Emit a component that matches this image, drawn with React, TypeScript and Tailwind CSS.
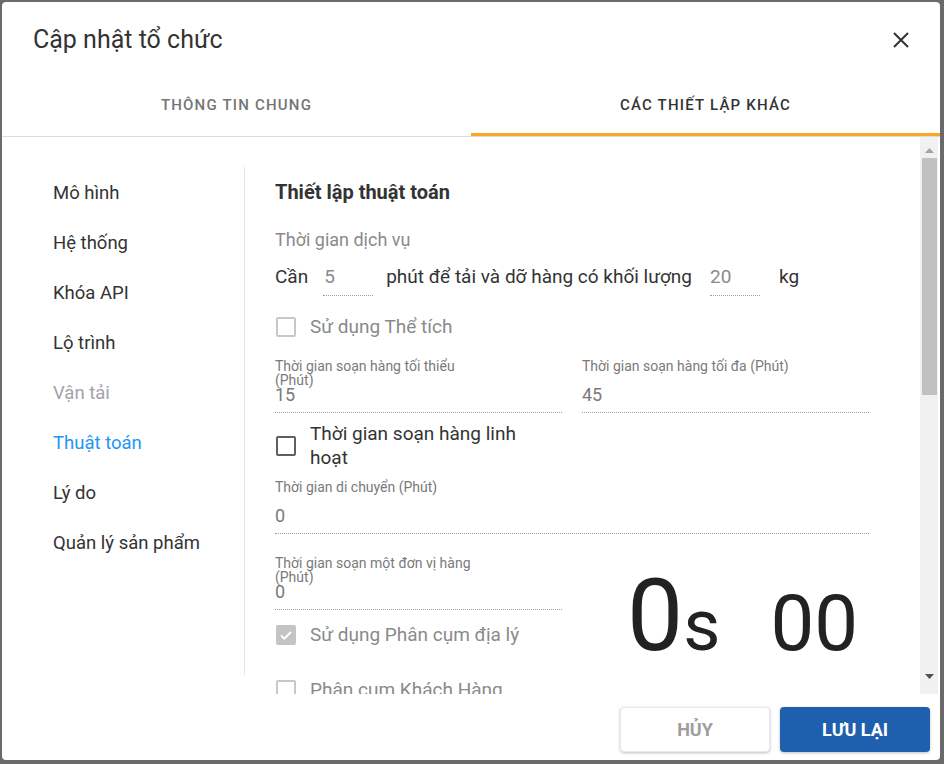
import React from 'react';

const menu = [
  { label: 'Mô hình', cls: 'text-[#333]' },
  { label: 'Hệ thống', cls: 'text-[#333]' },
  { label: 'Khóa API', cls: 'text-[#333]' },
  { label: 'Lộ trình', cls: 'text-[#333]' },
  { label: 'Vận tải', cls: 'text-[#a0a4a8]' },
  { label: 'Thuật toán', cls: 'text-[#2196f3]' },
  { label: 'Lý do', cls: 'text-[#333]' },
  { label: 'Quản lý sản phẩm', cls: 'text-[#333]' },
];

const Checkbox: React.FC<{ checked?: boolean; disabled?: boolean }> = ({ checked, disabled }) => {
  if (checked) {
    return (
      <span className="w-[20px] h-[20px] rounded-[2px] bg-[#c4c4c4] flex items-center justify-center shrink-0">
        <svg width="16" height="16" viewBox="0 0 24 24">
          <path d="M4.5 12.5l5 5 10-10" fill="none" stroke="#fff" strokeWidth="3" />
        </svg>
      </span>
    );
  }
  return (
    <span
      className={
        'block w-[20px] h-[20px] rounded-[2px] border-2 shrink-0 ' +
        (disabled ? 'border-[#c8c8c8]' : 'border-[#5f5f5f]')
      }
    />
  );
};

const Field: React.FC<{ label: string; value: string; className?: string }> = ({ label, value, className }) => (
  <div className={'relative pt-[26px] pb-[7px] border-b border-dotted border-[#9e9e9e] ' + (className || '')}>
    <div className="absolute top-0 left-0 w-[215px] text-[14px] leading-[14px] text-[#7a7a7a]">{label}</div>
    <div className="text-[18px] leading-[20px] text-[#7a7a7a]">{value}</div>
  </div>
);

const App: React.FC = () => {
  return (
    <div className="min-h-screen bg-[#6a6a6a] p-[2px]" style={{ fontFamily: 'Roboto, "Noto Sans", sans-serif' }}>
      <div className="w-[938px] h-[758px] bg-white rounded-[4px] flex flex-col overflow-hidden">
        {/* header */}
        <div className="h-[74px] flex items-center justify-between pl-[31px] pr-[30px] pt-[2px]">
          <h2 className="text-[25px] text-[#333]">Cập nhật tổ chức</h2>
          <svg width="18" height="18" viewBox="0 0 18 18">
            <path d="M2 2l14 14M16 2L2 16" stroke="#333" strokeWidth="2" />
          </svg>
        </div>

        {/* tabs */}
        <div className="h-[61px] flex border-b border-[#dcdcdc]">
          <div className="flex-1 flex items-center justify-center pb-[1px] text-[15px] font-medium tracking-[0.08em] text-[#757575]">
            THÔNG TIN CHUNG
          </div>
          <div className="flex-1 flex flex-col">
            <div className="flex-1 flex items-center justify-center pt-[2px] text-[15px] font-medium tracking-[0.08em] text-[#333]">
              CÁC THIẾT LẬP KHÁC
            </div>
            <div className="h-[3px] bg-[#f9a825]" />
          </div>
        </div>

        {/* body */}
        <div className="h-[557px] flex">
          <div className="flex-1 flex overflow-hidden">
            <div className="w-[243px] mt-[30px] h-[508px] border-r border-[#e1e6ee] pl-[51px] pt-[2px]">
              {menu.map((m) => (
                <div key={m.label} className={'h-[50px] flex items-center text-[18.5px] ' + m.cls}>
                  {m.label}
                </div>
              ))}
            </div>

            <div className="flex-1 pl-[30px] pt-[30px] text-[#333]">
              <h3 className="mt-[13px] text-[20px] leading-[24px] font-bold text-[#333]">Thiết lập thuật toán</h3>
              <div className="mt-[24px] text-[18px] leading-[24px] text-[#8a8a8a]">Thời gian dịch vụ</div>

              <div className="mt-[13px] flex items-start text-[19px] leading-[24px]">
                <span>Cần</span>
                <span className="ml-[15px] w-[50px] pb-[6px] border-b border-dotted border-[#9e9e9e] pl-[1px] text-[#8a8a8a]">5</span>
                <span className="ml-[13px]">phút để tải và dỡ hàng có khối lượng</span>
                <span className="ml-[18px] w-[50px] pb-[6px] border-b border-dotted border-[#9e9e9e] text-[#8a8a8a]">20</span>
                <span className="ml-[19px]">kg</span>
              </div>

              <div className="mt-[19px] flex items-center gap-[14px] text-[19px] leading-[24px] text-[#8a8a8a]">
                <span className="ml-[1px]"><Checkbox disabled /></span>
                <span>Sử dụng Thể tích</span>
              </div>

              <div className="mt-[20px] w-[594px] grid grid-cols-2 gap-x-[20px]">
                <Field label="Thời gian soạn hàng tối thiểu (Phút)" value="15" />
                <Field label="Thời gian soạn hàng tối đa (Phút)" value="45" />
              </div>

              <div className="mt-[9px] flex items-center gap-[14px] text-[19px] leading-[24px] text-[#333]">
                <span className="ml-[1px]"><Checkbox /></span>
                <span className="w-[240px]">Thời gian soạn hàng linh hoạt</span>
              </div>

              <Field className="mt-[10px] w-[594px]" label="Thời gian di chuyển (Phút)" value="0" />

              <div className="mt-[22px] w-[594px] grid grid-cols-2 gap-x-[20px]">
                <div>
                  <Field label="Thời gian soạn một đơn vị hàng (Phút)" value="0" />
                  <div className="mt-[13px] flex items-center gap-[14px] text-[19px] leading-[24px] text-[#8a8a8a]">
                    <span className="ml-[1px]"><Checkbox checked disabled /></span>
                    <span>Sử dụng Phân cụm địa lý</span>
                  </div>
                  <div className="mt-[31px] flex items-center gap-[14px] text-[19px] leading-[24px] text-[#8a8a8a]">
                    <span className="ml-[1px]"><Checkbox disabled /></span>
                    <span>Phân cum Khách Hàng</span>
                  </div>
                </div>
                <div className="pl-[45px] mt-[10px] flex items-baseline text-[#222] leading-none">
                  <span className="text-[100px]">0</span>
                  <span className="text-[72px]">s</span>
                  <span className="ml-[50px] text-[78px]">00</span>
                </div>
              </div>
            </div>
          </div>

          {/* scrollbar */}
          <div className="w-[18px] mr-[2px] bg-[#f1f1f1] flex flex-col items-center">
            <div className="h-[21px] w-full flex items-end justify-center pb-[5px]">
              <svg width="9" height="5" viewBox="0 0 9 5"><path d="M0 5L4.5 0L9 5z" fill="#a3a3a3" /></svg>
            </div>
            <div className="w-[15px] h-[237px] bg-[#c1c1c1]" />
            <div className="flex-1" />
            <div className="h-[21px] w-full flex items-start justify-center pt-[1px]">
              <svg width="9" height="5" viewBox="0 0 9 5"><path d="M0 0L4.5 5L9 0z" fill="#505050" /></svg>
            </div>
          </div>
        </div>

        {/* footer */}
        <div className="flex-1 flex justify-end items-start pt-[13px] pr-[10px] gap-[10px]">
          <button className="w-[150px] h-[45px] rounded-[4px] bg-white border border-[#e6e9ef] shadow-[0_1px_3px_rgba(0,0,0,0.25)] text-[18px] font-bold text-[#9e9e9e]">
            HỦY
          </button>
          <button className="w-[150px] h-[45px] rounded-[4px] bg-[#1e60ae] shadow-[0_1px_3px_rgba(0,0,0,0.25)] text-[18px] font-bold text-white">
            LƯU LẠI
          </button>
        </div>
      </div>
    </div>
  );
};

export default App;
